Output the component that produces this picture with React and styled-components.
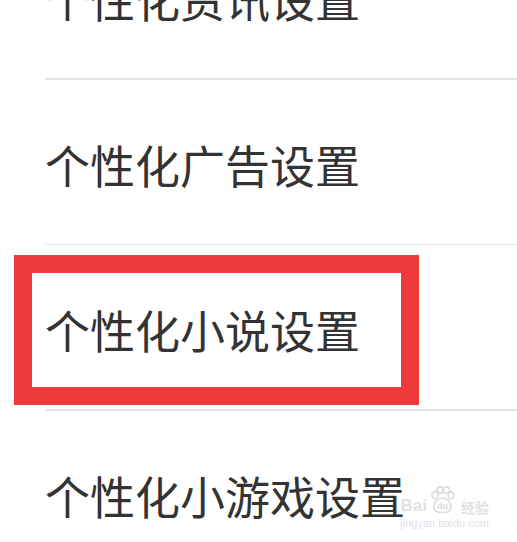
import styled, { createGlobalStyle } from "styled-components";

const GlobalStyle = createGlobalStyle`
  html, body {
    margin: 0;
    padding: 0;
    background: #fff;
    overflow: hidden;
  }
  body {
    font-family: "Noto Sans CJK SC", "Noto Sans", sans-serif;
  }
`;

const Page = styled.div`
  position: relative;
  width: 517px;
  height: 542px;
  overflow: hidden;
  background: #fff;
`;

const List = styled.div`
  display: flex;
  flex-direction: column;
  margin-top: -86px;
`;

const Row = styled.div`
  position: relative;
  height: 164px;
  display: flex;
  align-items: center;
  padding: 5px 0 0 45px;
  box-sizing: border-box;
`;

const Label = styled.span`
  font-size: 45px;
  line-height: 1;
  color: #333;
`;

const Divider = styled.div`
  height: 1.5px;
  margin-left: 45px;
  background: #e4e4e4;
`;

const Highlight = styled.div`
  position: absolute;
  left: 14px;
  top: 10px;
  width: 405px;
  height: 150px;
  border: 18px solid #ee3a3a;
  box-sizing: border-box;
  pointer-events: none;
`;

const Watermark = styled.div`
  position: absolute;
  right: 28px;
  bottom: 13px;
  display: flex;
  flex-direction: column;
  align-items: center;
  color: #e2e2e2;
  font-family: "Liberation Sans", Arial, sans-serif;
`;

const Brand = styled.div`
  display: flex;
  align-items: flex-end;
  gap: 2px;
  font-size: 17px;
  font-weight: bold;
  line-height: 1;
`;

const CnMark = styled.span`
  font-family: "Noto Sans CJK SC", sans-serif;
  font-size: 14px;
  margin-left: 3px;
`;

const Url = styled.div`
  font-size: 11px;
  margin-top: 3px;
`;

function Paw() {
  return (
    <svg width="27" height="28" viewBox="0 0 27 28" fill="none" stroke="#dcdcdc" strokeWidth="1.6">
      <ellipse cx="6" cy="9" rx="3" ry="3.6" />
      <ellipse cx="11" cy="4" rx="3" ry="3.4" />
      <ellipse cx="17.5" cy="4" rx="3" ry="3.4" />
      <ellipse cx="22" cy="9.5" rx="3" ry="3.6" />
      <path d="M5 22 C5 15 10 12 13.5 12 C17 12 22 15 22 22 C22 26 18 26.5 13.5 26.5 C9 26.5 5 26 5 22 Z" />
      <text x="13.5" y="23" fontSize="9" fontWeight="bold" textAnchor="middle" fill="#dcdcdc" stroke="none" fontFamily="Liberation Sans, sans-serif">du</text>
    </svg>
  );
}

const items = [
  "个性化资讯设置",
  "个性化广告设置",
  "个性化小说设置",
  "个性化小游戏设置",
];

export default function App() {
  return (
    <Page>
      <GlobalStyle />
      <List>
        {items.map((text, i) => (
          <div key={text}>
            {i > 0 && <Divider />}
            <Row>
              <Label>{text}</Label>
              {i === 2 && <Highlight />}
            </Row>
          </div>
        ))}
      </List>
      <Watermark>
        <Brand>
          <span>Bai</span>
          <Paw />
          <CnMark>经验</CnMark>
        </Brand>
        <Url>jingyan.baidu.com</Url>
      </Watermark>
    </Page>
  );
}
